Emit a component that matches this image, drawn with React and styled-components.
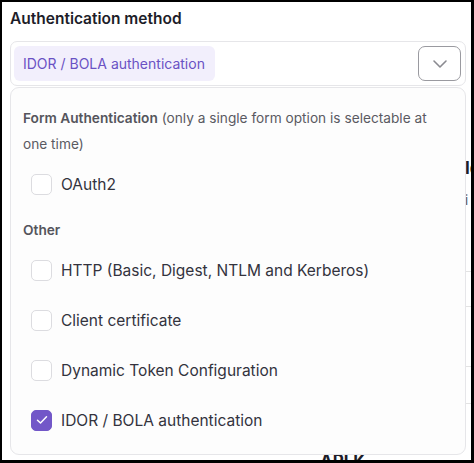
import React from "react";
import styled, { createGlobalStyle } from "styled-components";

const Global = createGlobalStyle`
  html, body { margin: 0; padding: 0; background: #000; }
  body { font-family: "Inter", "Lato", sans-serif; }
  * { box-sizing: border-box; }
`;

const Frame = styled.div`
  margin: 2px 3px 0 2px;
  width: 469px;
  height: 458px;
  background: #fff;
  overflow: hidden;
  position: relative;
`;

const Title = styled.div`
  font-weight: 600;
  font-size: 15.5px;
  color: #1d1d29;
  padding: 7px 0 0 8px;
  height: 39px;
  line-height: 19px;
`;

const SelectBox = styled.div`
  margin-left: 8px;
  width: 456px;
  height: 45px;
  border: 1px solid #e6e6e9;
  border-radius: 7px;
  display: flex;
  align-items: center;
  justify-content: space-between;
  padding: 0 4px 0 3px;
`;

const Chip = styled.div`
  background: #f2effc;
  color: #6a52c4;
  border-radius: 6px;
  height: 35px;
  display: flex;
  align-items: center;
  padding: 0 9px;
  font-size: 14px;
  width: 201px;
  white-space: nowrap;
`;

const ToggleBtn = styled.div`
  width: 43px;
  height: 35px;
  border: 1px solid #9a9aa0;
  border-radius: 7px;
  display: flex;
  align-items: center;
  justify-content: center;
`;

const Body = styled.div`
  position: relative;
`;

const Behind = styled.div`
  padding: 72px 0 0 463px;
`;

const BehindHead = styled.div`
  font-weight: 700;
  font-size: 17px;
  color: #1d1d29;
  height: 34px;
`;

const BehindSub = styled.div`
  font-size: 13px;
  color: #555;
  height: 79px;
`;

const BehindLine = styled.div`
  border-top: 1px solid #e3e3e3;
  height: ${(p) => p.$h}px;
`;

const Bottom = styled.div`
  position: absolute;
  left: 318px;
  top: 449px;
  font-weight: 700;
  font-size: 17px;
  color: #1d1d29;
`;

const Menu = styled.div`
  position: absolute;
  left: 8px;
  top: 85px;
  width: 456px;
  height: 368px;
  background: #fdfdfd;
  border: 1px solid #e6e6e9;
  border-radius: 9px;
  padding: 17px 20px 0 12px;
  z-index: 2;
`;

const GroupHead = styled.div`
  font-size: 13.7px;
  line-height: 26px;
  color: #5a5a62;
  b { font-weight: 600; color: #55555c; }
`;

const Option = styled.label`
  display: flex;
  align-items: center;
  gap: 9px;
  height: 50px;
  padding-left: 8px;
  font-size: 15.5px;
  color: #33333d;
`;

const Box = styled.span`
  width: 21px;
  height: 21px;
  border-radius: 5px;
  border: 1px solid ${(p) => (p.$checked ? "#7257c8" : "#dcdce0")};
  background: ${(p) => (p.$checked ? "#7257c8" : "#fff")};
  display: flex;
  align-items: center;
  justify-content: center;
`;

const Spacer = styled.div`
  height: ${(p) => p.$h}px;
`;

function Check({ checked, children }) {
  return (
    <Option>
      <Box $checked={checked}>
        {checked && (
          <svg width="12" height="10" viewBox="0 0 12 10">
            <path d="M1.5 5.2 L4.5 8 L10.5 1.8" fill="none" stroke="#fff" strokeWidth="1.5" strokeLinecap="round" strokeLinejoin="round" />
          </svg>
        )}
      </Box>
      {children}
    </Option>
  );
}

export default function App() {
  return (
    <>
      <Global />
      <Frame>
        <Title>Authentication method</Title>
        <SelectBox>
          <Chip>IDOR / BOLA authentication</Chip>
          <ToggleBtn>
            <svg width="16" height="10" viewBox="0 0 16 10">
              <path d="M2 2 L8 8 L14 2" fill="none" stroke="#8a8a90" strokeWidth="1.6" strokeLinecap="round" strokeLinejoin="round" />
            </svg>
          </ToggleBtn>
        </SelectBox>
        <Body>
          <Behind>
            <BehindHead>Identity</BehindHead>
            <BehindSub>i</BehindSub>
            <BehindLine $h={35} />
            <BehindLine $h={60} />
            <BehindLine $h={37} />
            <BehindLine $h={40} />
          </Behind>
        </Body>
        <Bottom>APLK</Bottom>
        <Menu>
          <GroupHead>
            <b>Form Authentication</b> (only a single form option is selectable at one time)
          </GroupHead>
          <Spacer $h={2} />
          <Check>OAuth2</Check>
          <Spacer $h={8} />
          <GroupHead>
            <b>Other</b>
          </GroupHead>
          <Spacer $h={2} />
          <Check>HTTP (Basic, Digest, NTLM and Kerberos)</Check>
          <Check>Client certificate</Check>
          <Check>Dynamic Token Configuration</Check>
          <Check checked>IDOR / BOLA authentication</Check>
        </Menu>
      </Frame>
    </>
  );
}
